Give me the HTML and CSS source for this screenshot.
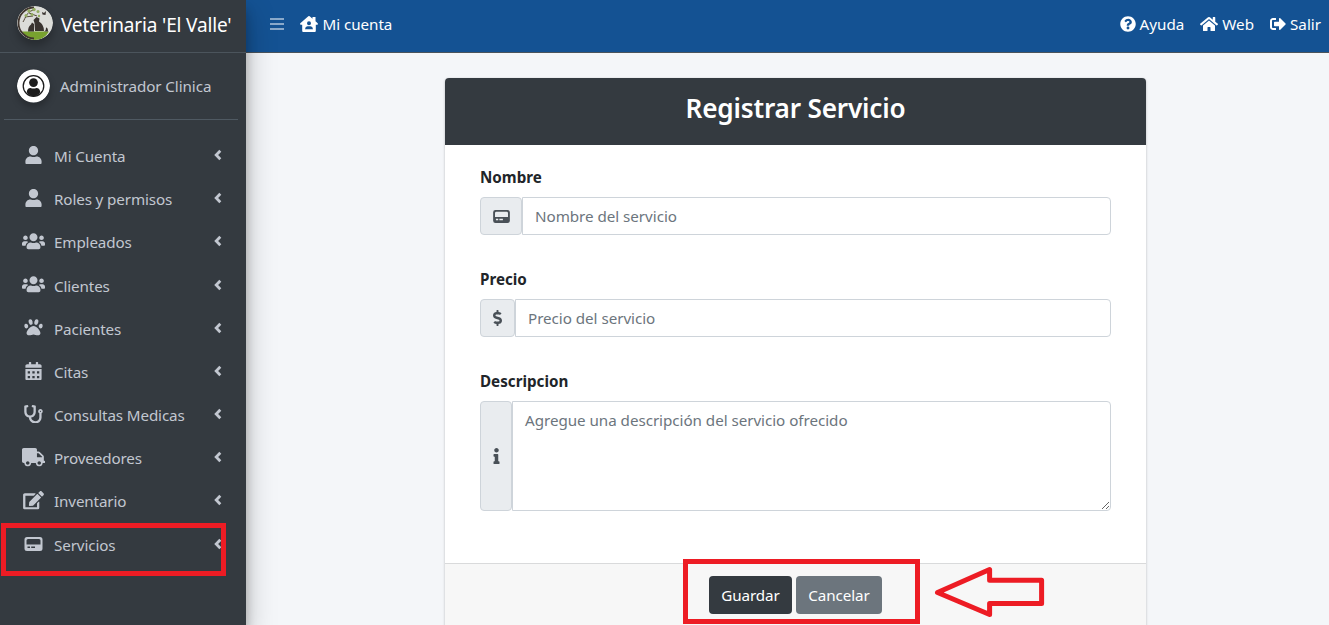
FILE: index.html
```html
<!DOCTYPE html>
<html lang="es">
<head>
<meta charset="utf-8">
<title>Registrar Servicio</title>
<link rel="stylesheet" href="styles.css">
</head>
<body>
<svg class="defs" aria-hidden="true">
  <symbol id="user" viewBox="0 0 448 512"><path d="M224 256c70.700 0 128-57.300 128-128S294.700 0 224 0 96 57.300 96 128s57.300 128 128 128zm89.600 32h-16.700c-22.200 10.200-46.900 16-72.900 16s-50.600-5.800-72.900-16h-16.700C60.200 288 0 348.200 0 422.400V464c0 26.500 21.500 48 48 48h352c26.500 0 48-21.500 48-48v-41.600c0-74.200-60.200-134.400-134.400-134.400z"/></symbol>
  <symbol id="users" viewBox="0 0 640 512"><path d="M96 224c35.300 0 64-28.700 64-64s-28.700-64-64-64-64 28.700-64 64 28.700 64 64 64zm448 0c35.300 0 64-28.700 64-64s-28.700-64-64-64-64 28.700-64 64 28.700 64 64 64zm32 32h-64c-17.600 0-33.500 7.100-45.100 18.600 40.300 22.100 68.900 62 75.100 109.400h66c17.700 0 32-14.300 32-32v-32c0-35.300-28.700-64-64-64zm-256 0c61.900 0 112-50.100 112-112S381.900 32 320 32 208 82.100 208 144s50.100 112 112 112zm76.800 32h-8.300c-20.800 10-43.900 16-68.500 16s-47.600-6-68.500-16h-8.300C179.600 288 128 339.600 128 403.200V432c0 26.500 21.500 48 48 48h288c26.500 0 48-21.500 48-48v-28.800c0-63.600-51.600-115.200-115.200-115.200zm-223.700-13.400C161.500 263.100 145.600 256 128 256H64c-35.300 0-64 28.700-64 64v32c0 17.700 14.300 32 32 32h65.900c6.300-47.400 34.900-87.300 75.200-109.400z"/></symbol>
  <symbol id="paw" viewBox="0 0 512 512"><path d="M256 224c-79.400 0-192 122.800-192 200.250 0 34.900 26.800 55.750 71.740 55.750 48.840 0 81.090-25.080 120.260-25.080 39.510 0 71.850 25.080 120.260 25.080 44.930 0 71.740-20.850 71.740-55.750C448 346.760 335.410 224 256 224z"/><ellipse cx="56" cy="224" rx="53" ry="66" transform="rotate(-17 56 224)"/><ellipse cx="456" cy="224" rx="53" ry="66" transform="rotate(17 456 224)"/><ellipse cx="177" cy="112" rx="54" ry="80" transform="rotate(-14 177 112)"/><ellipse cx="335" cy="112" rx="54" ry="80" transform="rotate(14 335 112)"/></symbol>
  <symbol id="calendar" viewBox="0 0 448 512"><path fill-rule="evenodd" d="M0 464c0 26.500 21.500 48 48 48h352c26.500 0 48-21.500 48-48V192H0zM64 256h64v64H64zM192 256h64v64h-64zM320 256h64v64h-64zM64 384h64v64H64zM192 384h64v64h-64zM320 384h64v64h-64z"/><path d="M400 64h-48V16c0-8.800-7.200-16-16-16h-32c-8.800 0-16 7.200-16 16v48H160V16c0-8.800-7.200-16-16-16h-32c-8.800 0-16 7.200-16 16v48H48C21.500 64 0 85.500 0 112v48h448v-48c0-26.500-21.500-48-48-48z"/></symbol>
  <symbol id="stethoscope" viewBox="0 0 512 512"><path d="M447.100 112c-34.200.5-62.300 28.400-63 62.600-.5 24.300 12.500 45.600 32 56.800V344c0 57.300-50.200 104-112 104-60 0-109.200-44.100-111.900-99.200C265 333.800 320 269.200 320 192V36.600c0-11.400-8.100-21.300-19.300-23.500L237.800.5c-13-2.600-25.600 5.800-28.200 18.800L206.400 35c-2.600 13 5.800 25.600 18.800 28.200l30.700 6.100v121.400c0 52.900-42.200 96.700-95.100 97.200-53.400.5-96.900-42.700-96.900-96V69.400l30.700-6.100c13-2.600 21.400-15.200 18.800-28.200l-3.100-15.700C107.700 6.400 95.100-2 82.100.6L19.300 13C8.100 15.300 0 25.100 0 36.600V192c0 77.300 55.100 142 128.100 156.800C130.700 439.200 208.600 512 304 512c97 0 176-75.400 176-168V231.400c19.100-11.100 32-31.700 32-55.400 0-35.700-29.200-64.500-64.900-64zm.9 80c-8.800 0-16-7.200-16-16s7.200-16 16-16 16 7.200 16 16-7.200 16-16 16z"/></symbol>
  <symbol id="truck" viewBox="0 0 640 512"><path d="M624 352h-16V243.900c0-12.700-5.100-24.900-14.100-33.900L494 110.100c-9-9-21.200-14.100-33.900-14.100H416V48c0-26.500-21.500-48-48-48H48C21.500 0 0 21.500 0 48v320c0 26.500 21.500 48 48 48h16c0 53 43 96 96 96s96-43 96-96h128c0 53 43 96 96 96s96-43 96-96h48c8.800 0 16-7.200 16-16v-32c0-8.800-7.200-16-16-16zM160 464c-26.500 0-48-21.500-48-48s21.500-48 48-48 48 21.500 48 48-21.500 48-48 48zm320 0c-26.500 0-48-21.500-48-48s21.500-48 48-48 48 21.500 48 48-21.500 48-48 48zm80-208H416V144h44.100l99.900 99.900V256z"/></symbol>
  <symbol id="edit" viewBox="0 0 576 512"><path d="M402.600 83.200l90.200 90.200c3.800 3.800 3.800 10 0 13.800L274.400 405.600l-92.800 10.300c-12.400 1.400-22.900-9.100-21.500-21.500l10.300-92.800L388.800 83.200c3.800-3.800 10-3.800 13.800 0zm162-22.900l-48.800-48.800c-15.200-15.200-39.900-15.200-55.200 0l-35.400 35.400c-3.800 3.800-3.800 10 0 13.800l90.200 90.200c3.800 3.800 10 3.800 13.800 0l35.400-35.400c15.200-15.300 15.200-40 0-55.200zM384 346.200V448H64V128h229.800c3.200 0 6.200-1.300 8.500-3.500l40-40c7.600-7.600 2.200-20.500-8.500-20.500H48C21.500 64 0 85.500 0 112v352c0 26.500 21.500 48 48 48h352c26.500 0 48-21.500 48-48V306.200c0-10.700-12.900-16-20.500-8.500l-40 40c-2.200 2.300-3.500 5.300-3.500 8.500z"/></symbol>
  <symbol id="card" viewBox="0 0 18 14"><path fill-rule="evenodd" d="M2.500 0h13A2.500 2.500 0 0 1 18 2.500v9a2.500 2.500 0 0 1-2.500 2.500h-13A2.500 2.500 0 0 1 0 11.500v-9A2.500 2.500 0 0 1 2.500 0zM3.500 2Q2 2 2 3.500V7.500H16V3.500Q16 2 14.500 2zM3 9.500V11H5.500V9.500zM6.700 9.500V11H10.500V9.500z"/></symbol>
  <symbol id="angle" viewBox="0 0 8 12"><path d="M6.300 1.800L2.200 6l4.100 4.200" fill="none" stroke="currentColor" stroke-width="2.800"/></symbol>
  <symbol id="help" viewBox="0 0 512 512"><path d="M504 256c0 137-111 248-248 248S8 393 8 256C8 119 119 8 256 8s248 111 248 248zM262.700 90c-54.500 0-89.300 23-116.600 63.800-3.500 5.300-2.400 12.400 2.700 16.200l34.700 26.300c5.200 4 12.600 3 16.700-2.100 17.800-22.700 30.100-35.800 57.300-35.800 20.400 0 45.700 13.100 45.700 33 0 14.900-12.400 22.600-32.500 33.900C247.100 238.500 216 254.900 216 296v4c0 6.600 5.400 12 12 12h56c6.600 0 12-5.400 12-12v-1.300c0-28.500 83.200-29.700 83.200-106.700 0-58-60.200-102-116.500-102zM256 338c-25.400 0-46 20.600-46 46s20.600 46 46 46 46-20.600 46-46-20.600-46-46-46z"/></symbol>
  <symbol id="home" viewBox="0 0 576 512"><path d="M280.370 148.260L96 300.110V464a16 16 0 0 0 16 16l112.060-.29a16 16 0 0 0 15.920-16V368a16 16 0 0 1 16-16h64a16 16 0 0 1 16 16v95.640a16 16 0 0 0 16 16.050L464 480a16 16 0 0 0 16-16V300L295.670 148.260a12.190 12.190 0 0 0-15.300 0zM571.600 251.470L488 182.560V44.050a12 12 0 0 0-12-12h-56a12 12 0 0 0-12 12v72.610L318.470 43a48 48 0 0 0-61 0L4.340 251.470a12 12 0 0 0-1.600 16.900l25.500 31A12 12 0 0 0 45.150 301l235.220-193.740a12.190 12.190 0 0 1 15.300 0L530.900 301a12 12 0 0 0 16.900-1.600l25.500-31a12 12 0 0 0-1.700-16.930z"/></symbol>
  <symbol id="houseuser" viewBox="0 0 18 16"><path fill-rule="evenodd" d="M8.300.3Q9 -.2 9.700.3L12.500 2.700V1H15.500V5.300L17.700 7.300Q18.300 8.400 17.300 8.800H15.800V15Q15.800 16 14.800 16H3.200Q2.200 16 2.200 15V8.800H.7Q-.3 8.400.3 7.300zM9 5.300A2 2 0 1 0 9 9.300 2 2 0 1 0 9 5.300zM7.500 10.300Q5.300 10.500 5 13.300H13Q12.700 10.500 10.500 10.300z"/></symbol>
  <symbol id="exit" viewBox="0 0 512 512"><path d="M497 273L329 441c-15 15-41 4.500-41-17v-96H152c-13.300 0-24-10.700-24-24v-96c0-13.300 10.700-24 24-24h136V88c0-21.400 25.900-32 41-17l168 168c9.300 9.400 9.300 24.600 0 34zM192 436v-40c0-6.600-5.400-12-12-12H96c-17.700 0-32-14.300-32-32V160c0-17.700 14.300-32 32-32h84c6.600 0 12-5.400 12-12V76c0-6.600-5.400-12-12-12H96c-53 0-96 43-96 96v192c0 53 43 96 96 96h84c6.600 0 12-5.400 12-12z"/></symbol>
  <symbol id="dollar" viewBox="0 0 288 512"><path d="M209.200 233.400l-108-31.600C88.700 198.200 80 186.500 80 173.500c0-16.300 13.200-29.500 29.500-29.500h66.300c12.200 0 24.200 3.700 34.200 10.500 6.100 4.100 14.300 3.100 19.500-2l34.800-34c7.100-6.900 6.100-18.400-1.800-24.500C238 74.800 207.400 64.100 176 64V16c0-8.800-7.200-16-16-16h-32c-8.800 0-16 7.200-16 16v48h-2.500C45.800 64-5.400 118.700.5 183.600c4.200 46.100 39.400 83.600 83.800 96.600l102.500 30c12.500 3.700 21.200 15.300 21.200 28.300 0 16.300-13.200 29.500-29.500 29.500h-66.300C100 368 88 364.300 78 357.500c-6.100-4.100-14.300-3.100-19.500 2l-34.800 34c-7.100 6.900-6.100 18.400 1.800 24.500 24.500 19.200 55.100 29.900 86.500 30v48c0 8.800 7.200 16 16 16h32c8.800 0 16-7.200 16-16v-48.200c46.600-.9 90.300-28.600 105.700-72.700 21.500-61.600-14.600-124.800-72.500-141.700z"/></symbol>
  <symbol id="info" viewBox="0 0 192 512"><path d="M20 424.200h20V279.800H20c-11 0-20-9-20-20V212c0-11 9-20 20-20h112c11 0 20 9 20 20v212.200h20c11 0 20 9 20 20V492c0 11-9 20-20 20H20c-11 0-20-9-20-20v-47.800c0-11 9-20 20-20zM96 0C56.200 0 24 32.200 24 72s32.200 72 72 72 72-32.200 72-72S135.800 0 96 0z"/></symbol>
</svg>

<div class="app">
  <aside class="sidebar">
    <a class="brand">
      <svg class="brand-logo" viewBox="0 0 36 34" preserveAspectRatio="none">
        <ellipse cx="18" cy="17" rx="18" ry="17" fill="#dcddd9"/>
        <path d="M5 25.500h27Q27 34 18 34T5 25.500z" fill="#78a22f"/>
        <path d="M17 1.500A15.500 15.500 0 0 0 17 32.500" fill="none" stroke="#41362f" stroke-width="1.800"/>
        <path d="M6 16C9 11 9 7 16 4M8 11l8-1M12 7l8 3" fill="none" stroke="#554a3a" stroke-width="1"/>
        <g fill="#94ad61"><circle cx="12" cy="5" r="1.700"/><circle cx="17" cy="3.500" r="1.700"/><circle cx="21" cy="5.500" r="1.500"/><circle cx="9" cy="9.500" r="1.500"/><circle cx="15" cy="8.500" r="1.500"/><circle cx="22" cy="10" r="1.200"/></g>
        <path d="M18 25l-.5-8-1-3 3-3 3 1.500-.5 3q5 3 5 9.500zM11 25.500q0-5 3-7l1-2 2 1.500v7.500zM25 6l2 1 2-2-.5 4-3-.5z" fill="#39332f"/>
        <path d="M26 25.500q3 .5 3-4 2 0 2 4z" fill="#39332f"/>
      </svg>
      <span class="brand-text">Veterinaria 'El Valle'</span>
    </a>
    <div class="user-panel">
      <svg class="avatar" viewBox="0 0 34 34">
        <circle cx="17" cy="17" r="17" fill="#fff"/>
        <circle cx="17" cy="17" r="10.600" fill="none" stroke="#1c1c1c" stroke-width="1.300"/>
        <circle cx="17" cy="13.500" r="4.500" fill="#1c1c1c"/>
        <path d="M10 23.500q.5-4.500 4-4.500 3 1.300 6 0 3.500 0 4 4.500-3 4-7 4t-7-4z" fill="#1c1c1c"/>
      </svg>
      <span class="user-name">Administrador Clinica</span>
    </div>
    <nav class="menu">
      <a class="item"><svg class="icon"><use href="#user"/></svg><span>Mi Cuenta</span><svg class="angle"><use href="#angle"/></svg></a>
      <a class="item"><svg class="icon"><use href="#user"/></svg><span>Roles y permisos</span><svg class="angle"><use href="#angle"/></svg></a>
      <a class="item"><svg class="icon"><use href="#users"/></svg><span>Empleados</span><svg class="angle"><use href="#angle"/></svg></a>
      <a class="item"><svg class="icon"><use href="#users"/></svg><span>Clientes</span><svg class="angle"><use href="#angle"/></svg></a>
      <a class="item"><svg class="icon"><use href="#paw"/></svg><span>Pacientes</span><svg class="angle"><use href="#angle"/></svg></a>
      <a class="item"><svg class="icon"><use href="#calendar"/></svg><span>Citas</span><svg class="angle"><use href="#angle"/></svg></a>
      <a class="item"><svg class="icon"><use href="#stethoscope"/></svg><span>Consultas Medicas</span><svg class="angle"><use href="#angle"/></svg></a>
      <a class="item"><svg class="icon"><use href="#truck"/></svg><span>Proveedores</span><svg class="angle"><use href="#angle"/></svg></a>
      <a class="item"><svg class="icon"><use href="#edit"/></svg><span>Inventario</span><svg class="angle"><use href="#angle"/></svg></a>
      <a class="item"><svg class="icon flat"><use href="#card"/></svg><span>Servicios</span><svg class="angle"><use href="#angle"/></svg></a>
    </nav>
  </aside>

  <div class="page">
    <header class="navbar">
      <span class="burger"><i></i><i></i><i></i></span>
      <a class="nav-link account"><svg class="nav-house"><use href="#houseuser"/></svg><span>Mi cuenta</span></a>
      <div class="nav-right">
        <a class="nav-link"><svg class="nav-icon"><use href="#help"/></svg><span>Ayuda</span></a>
        <a class="nav-link"><svg class="nav-home"><use href="#home"/></svg><span>Web</span></a>
        <a class="nav-link"><svg class="nav-icon"><use href="#exit"/></svg><span>Salir</span></a>
      </div>
    </header>
    <main class="content">
      <form class="card">
        <div class="card-header"><h1 class="title">Registrar Servicio</h1></div>
        <div class="card-body">
          <label class="label">Nombre</label>
          <div class="group">
            <span class="addon wide"><svg class="addon-card"><use href="#card"/></svg></span>
            <input class="control" type="text" placeholder="Nombre del servicio">
          </div>
          <label class="label">Precio</label>
          <div class="group">
            <span class="addon mid"><svg class="addon-dollar"><use href="#dollar"/></svg></span>
            <input class="control" type="text" placeholder="Precio del servicio">
          </div>
          <label class="label">Descripcion</label>
          <div class="group area">
            <span class="addon slim"><svg class="addon-info"><use href="#info"/></svg></span>
            <textarea class="control" placeholder="Agregue una descripción del servicio ofrecido"></textarea>
          </div>
        </div>
        <div class="card-footer">
          <button class="btn save" type="button">Guardar</button>
          <button class="btn cancel" type="button">Cancelar</button>
        </div>
      </form>
    </main>
  </div>
</div>

<div class="mark mark-menu"></div>
<div class="mark mark-buttons"></div>
<svg class="arrow" viewBox="0 0 112 54"><path d="M4.500 27.500L56.600 4.500v10.800h52v23.200h-52v11z" fill="none" stroke="#ed1c24" stroke-width="5" stroke-linejoin="round"/></svg>
</body>
</html>
```
FILE: styles.css
```css
* { box-sizing: border-box; }
body {
  margin: 0;
  height: 625px;
  overflow: hidden;
  background: #f4f6f9;
  color: #212529;
  font: 15.2px/24px "Noto Sans", "Open Sans", sans-serif;
  letter-spacing: -.05px;
}
svg { fill: currentColor; flex: none; display: block; }
.defs { position: absolute; width: 0; height: 0; }
.app { display: flex; height: 625px; }

.sidebar {
  flex: none;
  width: 246px;
  background: #343a40;
  color: #c2c7d0;
  box-shadow: 0 14px 28px rgba(0,0,0,.25), 0 10px 10px rgba(0,0,0,.22);
  z-index: 1;
}
.brand {
  display: flex;
  align-items: center;
  height: 53px;
  padding: 0 0 7px 17px;
  border-bottom: 1px solid #4b545c;
  color: #fff;
  white-space: nowrap;
}
.brand-logo { width: 36px; height: 34px; border-radius: 50%; box-shadow: 0 6px 8px rgba(0,0,0,.25); }
.brand-text { margin: 5px 0 0 8px; font-size: 19px; letter-spacing: -.15px; }
.user-panel {
  display: flex;
  align-items: center;
  height: 67px;
  margin: 0 8px 0 4px;
  padding-left: 13px;
  border-bottom: 1px solid #4f5962;
  white-space: nowrap;
}
.avatar { width: 33px; height: 34px; border-radius: 50%; box-shadow: 0 4px 7px rgba(0,0,0,.25); }
.user-name { margin-left: 10px; letter-spacing: -.08px; }
.menu { padding-top: 14.4px; letter-spacing: -.12px; }
.item { display: flex; align-items: center; height: 43.2px; padding: 0 24px 0 22px; }
.item span { flex: 1; margin-left: 9px; white-space: nowrap; }
.icon { width: 23px; height: 18.500px; margin-top: -2px; }
.icon.flat { height: 14px; }
.angle { width: 8px; height: 12px; margin-top: -2px; }

.page { flex: 1; min-width: 0; }
.navbar {
  display: flex;
  align-items: center;
  height: 53px;
  padding: 0 8px 4px 24px;
  background: #145293;
  border-bottom: 1px solid #4b545c;
  color: #fff;
}
.burger { display: grid; gap: 2.5px; width: 14px; }
.burger i { height: 2.5px; background: #8aa9ca; }
.nav-link { display: flex; align-items: center; white-space: nowrap; }
.account { margin-left: 16px; gap: 4.500px; }
.nav-house { width: 18px; height: 16px; }
.nav-right { display: flex; gap: 16px; margin-left: auto; letter-spacing: 0; }
.nav-right .nav-link { gap: 4px; }
.nav-icon { width: 16px; height: 16px; }
.nav-home { width: 18px; height: 16px; }

.content { padding: 25px 183px 0 199px; }
.card {
  margin: 0;
  height: 560px;
  background: #fff;
  border-radius: 4px;
  box-shadow: 0 0 1px rgba(0,0,0,.125), 0 1px 3px rgba(0,0,0,.2);
}
.card-header {
  height: 67px;
  padding-top: 14px;
  border-radius: 4px 4px 0 0;
  background: #343a40;
  color: #fff;
  text-align: center;
}
.title { margin: 0; font-size: 26.200px; line-height: 33px; font-weight: 600; letter-spacing: -.2px; }
.card-body { height: 418px; padding: 20px 35px 0; }
.label { display: block; height: 32px; font-weight: 700; line-height: 25px; letter-spacing: 0; }
.group { display: flex; height: 38px; margin-bottom: 32px; }
.group.area { height: 110px; }
.addon {
  display: flex;
  align-items: center;
  justify-content: center;
  border: 1px solid #ced4da;
  border-radius: 4px;
  background: #e9ecef;
  color: #495057;
}
.wide { width: 42px; }
.mid { width: 35px; }
.slim { width: 32px; }
.addon-card { width: 17px; height: 13px; }
.addon-dollar { width: 9px; height: 16px; }
.addon-info { width: 7px; height: 16px; }
.control {
  flex: 1;
  min-width: 0;
  margin: 0;
  padding: 6px 12px;
  border: 1px solid #ced4da;
  border-radius: 0 4px 4px 0;
  background: #fff;
  font: inherit;
  letter-spacing: -.04px;
  outline: 0;
}
.control::placeholder { color: #6c757d; }
.card-footer {
  display: flex;
  justify-content: center;
  gap: 4px;
  height: 75px;
  padding-top: 12px;
  border-top: 1px solid #d9dadb;
  background: #f7f7f7;
}
.btn { height: 38px; padding: 0; border: 0; border-radius: 4px; color: #fff; font: inherit; letter-spacing: -.1px; }
.save { width: 83px; background: #343a40; }
.cancel { width: 86px; background: #6c757d; }

/* Annotations drawn over the interface */
.mark { position: absolute; border: 5px solid #ed1c24; z-index: 2; }
.mark-menu { left: 1px; top: 523px; width: 225px; height: 53px; }
.mark-buttons { left: 683px; top: 559px; width: 237px; height: 65px; }
.arrow { position: absolute; left: 933px; top: 565px; width: 112px; height: 54px; z-index: 2; }
```
